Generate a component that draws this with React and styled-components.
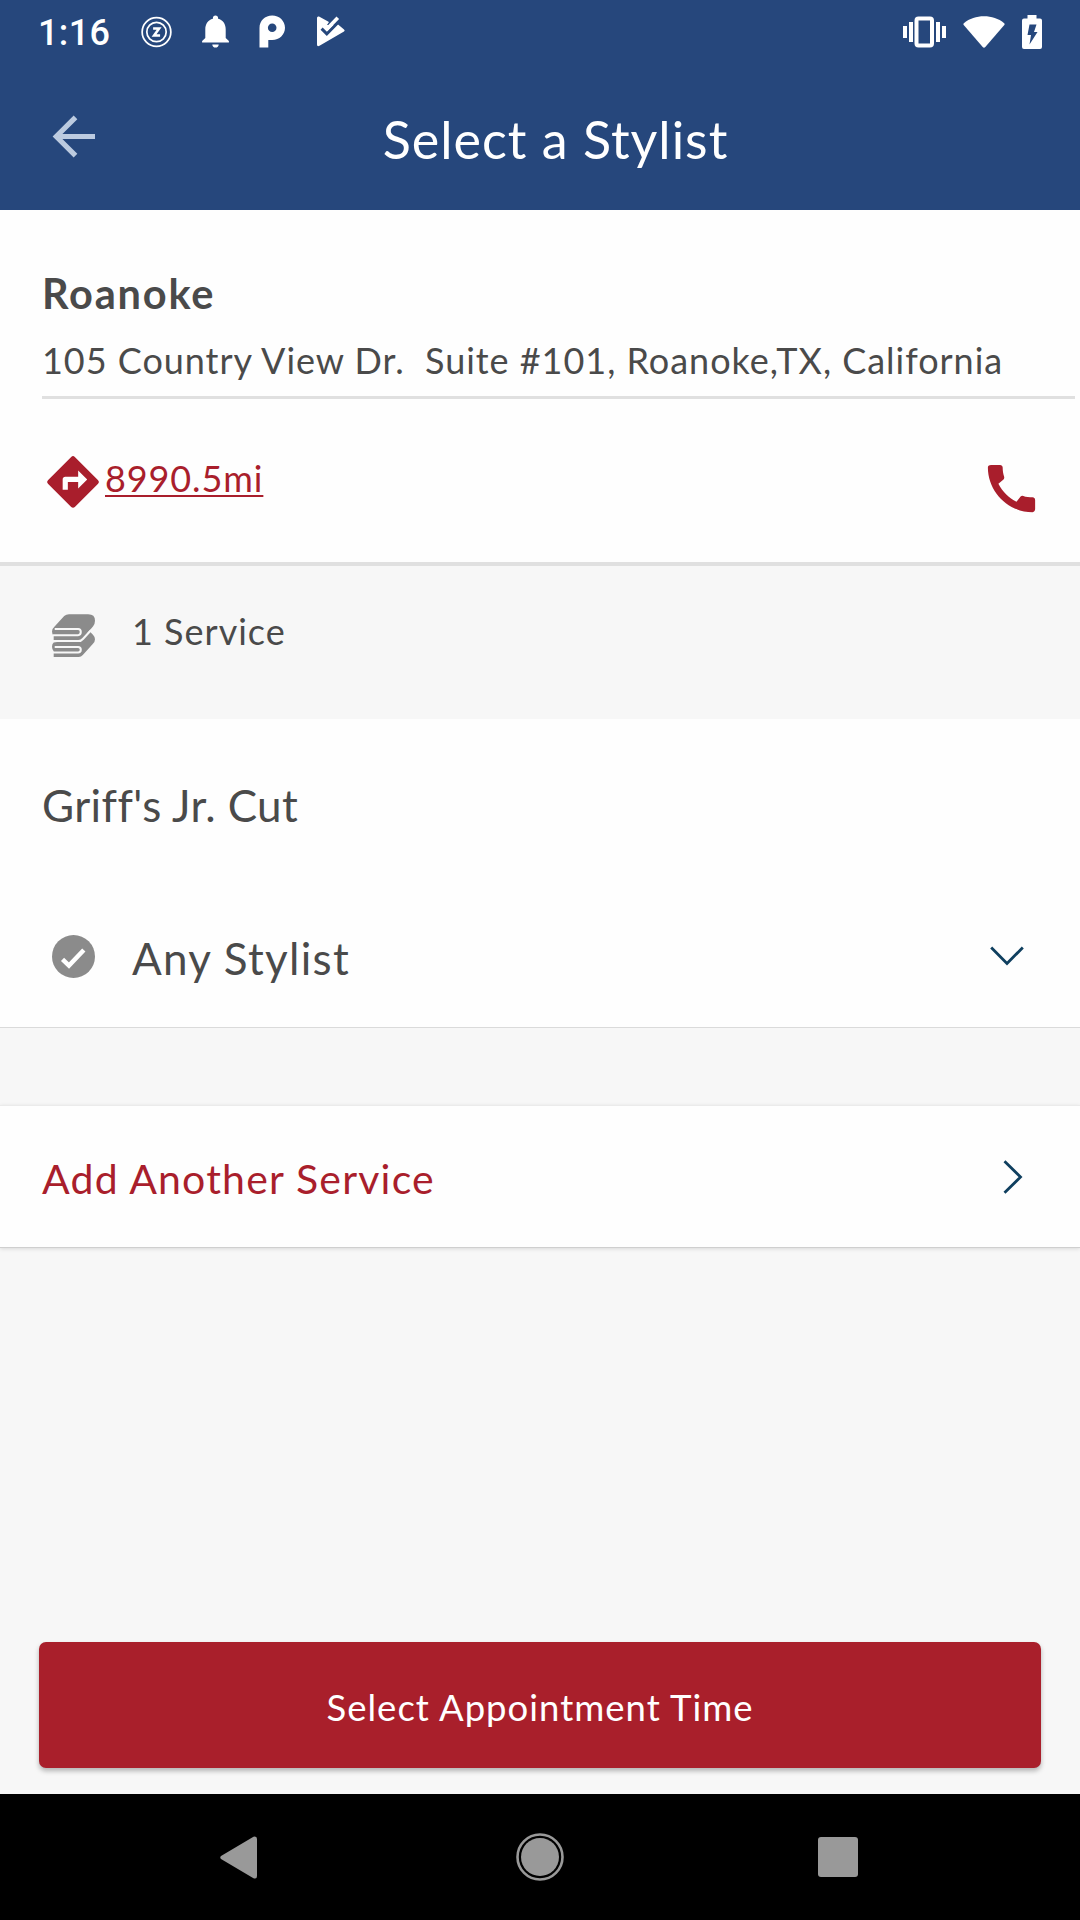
import React from 'react';
import styled, { createGlobalStyle } from 'styled-components';

const GlobalStyle = createGlobalStyle`
  * {
    box-sizing: border-box;
  }

  body {
    margin: 0;
    background: #f7f7f7;
    color: #4a4a4a;
    font-family: Lato, "Open Sans", sans-serif;
  }

  svg {
    display: block;
    flex-shrink: 0;
  }
`;

const Screen = styled.div`
  width: 1080px;
  height: 1920px;
  display: flex;
  flex-direction: column;
  overflow: hidden;
`;

const Header = styled.header`
  height: 210px;
  background: #26477c;
  color: #fff;
`;

const StatusBar = styled.div`
  height: 63px;
  display: flex;
  align-items: center;
  justify-content: space-between;
  padding: 0 38px;
`;

const StatusGroup = styled.div`
  display: flex;
  align-items: center;
  gap: ${({ $gap }) => $gap}px;
`;

const Clock = styled.span`
  width: 73px;
  padding-top: 3px;
  font-family: Roboto, sans-serif;
  font-size: 36px;
  font-weight: 500;
  letter-spacing: 0.4px;
`;

const AppBar = styled.div`
  height: 147px;
  display: flex;
  padding: 0 64px 0 52px;
`;

const BackButton = styled.div`
  width: 43px;
  padding-top: 52px;
`;

const Title = styled.h1`
  flex: 1;
  margin: 0;
  font-size: 52px;
  font-weight: 400;
  line-height: 153px;
  letter-spacing: 1px;
  text-align: center;
`;

const SalonCard = styled.section`
  height: 356px;
  padding: 58px 0 0 42px;
  background: #fefefe;
  border-bottom: 4px solid #e0e0e0;
`;

const SalonInfo = styled.div`
  margin-right: 5px;
  padding-bottom: 14px;
  border-bottom: 3px solid #e0e0e0;
`;

const SalonName = styled.h2`
  margin: 0 0 20px;
  font-size: 41.5px;
  font-weight: 700;
  line-height: 50px;
  letter-spacing: 1.8px;
`;

const Address = styled.p`
  margin: 0;
  font-size: 36px;
  line-height: 44px;
  letter-spacing: 0.97px;
  white-space: pre;
`;

const ContactRow = styled.div`
  display: flex;
  align-items: flex-start;
  justify-content: space-between;
  padding: 52px 37px 0 0;
  color: #a91e2c;
`;

const Directions = styled.div`
  display: flex;
  gap: 1px;
`;

const Distance = styled.a`
  margin-top: 5px;
  font-size: 36px;
  line-height: 44px;
  letter-spacing: 0.9px;
  text-decoration: underline;
  text-decoration-thickness: 2px;
  text-underline-offset: 3px;
  text-decoration-skip-ink: none;
`;

const CallButton = styled.div`
  padding-top: 6px;
`;

const ServiceCount = styled.div`
  height: 153px;
  display: flex;
  align-items: flex-start;
  gap: 37px;
  padding: 42px 0 0 52px;
`;

const CountIcon = styled.div`
  padding-top: 6px;
`;

const CountLabel = styled.span`
  padding-top: 1px;
  font-size: 36px;
  line-height: 44px;
  letter-spacing: 1px;
`;

const ServiceCard = styled.section`
  height: 309px;
  padding-top: 59px;
  background: #fefefe;
  border-bottom: 1px solid #dadada;
`;

const ServiceName = styled.h3`
  margin: 0 0 95px;
  padding-left: 42px;
  font-size: 44px;
  font-weight: 400;
  line-height: 54px;
  letter-spacing: 0.4px;
`;

const StylistRow = styled.div`
  display: flex;
  align-items: center;
  gap: 37px;
  padding: 0 56px 0 52px;
`;

const StylistName = styled.span`
  flex: 1;
  padding-top: 4px;
  font-size: 44px;
  line-height: 54px;
  letter-spacing: 1.3px;
`;

const AddServiceRow = styled.div`
  height: 143px;
  margin-top: 77px;
  display: flex;
  align-items: flex-start;
  justify-content: space-between;
  padding: 48px 57px 0 42px;
  background: #fefefe;
  color: #a91e2c;
  border-top: 1px solid #ebebeb;
  border-bottom: 1px solid #cfcfcf;
  box-shadow: 0 1px 4px rgba(0, 0, 0, 0.12);
`;

const AddServiceLabel = styled.span`
  font-size: 41px;
  line-height: 50px;
  letter-spacing: 1.2px;
`;

const ChevronBox = styled.div`
  padding-top: 6px;
`;

const SubmitButton = styled.button`
  height: 126px;
  margin: auto 39px 26px;
  padding: 3px 0 0;
  border: 0;
  border-radius: 7px;
  background: #a91f2b;
  color: #fff;
  font-family: inherit;
  font-size: 36.5px;
  letter-spacing: 1px;
  box-shadow: 0 3px 5px rgba(0, 0, 0, 0.28);
`;

const NavBar = styled.nav`
  height: 126px;
  display: flex;
  justify-content: space-between;
  align-items: center;
  padding: 0 222px 0 220px;
  background: #000;
`;

const HomeButton = styled.div`
  padding-left: 4px;
`;

const BadgeIcon = () => (
  <svg width="31" height="32" viewBox="0 0 32 32" fill="none" stroke="#fff">
    <circle cx="16" cy="16" r="14.8" strokeWidth="1.8" />
    <circle cx="16" cy="16" r="10" strokeWidth="1.8" />
    <path d="M12.5 12.4h6.200l-5.200 7.200h6.200" strokeWidth="2.600" />
  </svg>
);

const BellIcon = () => (
  <svg width="27" height="33" viewBox="0 0 27 33" fill="#fff">
    <path d="M13.5 0.5c1.6 0 2.6 1.1 2.6 2.5v0.8c5 1.3 7.6 5.5 7.6 10.4v8.8l3.2 3v1.6H0.1V26l3.2-3v-8.8c0-4.9 2.6-9.1 7.6-10.4V3c0-1.4 1-2.5 2.6-2.5zM10.3 29.4h6.4c0 1.8-1.4 3.2-3.2 3.2s-3.2-1.4-3.2-3.2z" />
  </svg>
);

const ParkingIcon = () => (
  <svg width="27" height="33" viewBox="0 0 27 33">
    <path
      fill="#fff"
      fillRule="evenodd"
      d="M0.5 32.5V13C0.5 5.500 6 0.500 13.200 0.500S26 6 26 12.800 20.500 25 13.200 25H9.300v7.500zM13.200 8.500a4.300 4.300 0 1 0 0 8.600 4.300 4.300 0 0 0 0-8.600z"
    />
  </svg>
);

const PlayCheckIcon = () => (
  <svg width="30" height="31" viewBox="0 0 30 31">
    <path
      d="M3 0.6L13 6 11 9 20 9l1.500-1L28 13.500q1.400 1 0 2L3.500 29.800Q1 31 1 28.500V2Q1 0 3 0.600z"
      fill="#fff"
    />
    <path d="M5.600 12.600l5.200 5.200L21.500 7" fill="none" stroke="#26477c" strokeWidth="3" />
    <path d="M10 14L21.800 1.800" fill="none" stroke="#fff" strokeWidth="3.600" />
  </svg>
);

const VibrateIcon = () => (
  <svg width="43" height="32" viewBox="0 0 43 32" fill="#fff">
    <rect x="0" y="10" width="4" height="12" />
    <rect x="6" y="6" width="4" height="20" />
    <rect x="33" y="6" width="4" height="20" />
    <rect x="39" y="10" width="4" height="12" />
    <rect x="13.5" y="2.5" width="15.5" height="27" rx="2" fill="none" stroke="#fff" strokeWidth="4" />
  </svg>
);

const WifiIcon = () => (
  <svg width="42" height="32" viewBox="0 0 42 32" fill="#fff">
    <path d="M0.8 7.2C6.5 2.5 13.5 0.3 21 0.3s14.5 2.2 20.2 6.9q0.8 0.8 0.1 1.7L22.3 31q-1.3 1.4-2.6 0L0.7 8.9q-0.7-0.9 0.1-1.7z" />
  </svg>
);

const BatteryIcon = () => (
  <svg width="20" height="34" viewBox="0 0 20 34">
    <path d="M5.5 0h9v3.5H18q2 0 2 2V32q0 2-2 2H2q-2 0-2-2V5.500q0-2 2-2h3.500z" fill="#fff" />
    <path d="M7.500 9.500h7L12 17h3.500L7.500 29.500l1.500-9.500H5.500z" fill="#26477c" />
  </svg>
);

const BackIcon = () => (
  <svg width="43" height="43" viewBox="0 0 43 43" fill="none" stroke="#bccbe0" strokeWidth="5.2">
    <path d="M43 21.500H5M23.500 2.300L4.300 21.500l19.200 19.200" />
  </svg>
);

const DirectionsIcon = () => (
  <svg width="62" height="62" viewBox="0 0 24 24" fill="#a91e2c">
    <path d="M21.71 11.29l-9-9a.996.996 0 0 0-1.41 0l-9 9a.996.996 0 0 0 0 1.41l9 9c.39.39 1.02.39 1.41 0l9-9a.996.996 0 0 0 0-1.41zM14 14.500V12h-4v3H8v-4c0-.55.45-1 1-1h5V7.500l3.500 3.500-3.500 3.500z" />
  </svg>
);

const PhoneIcon = () => (
  <svg width="63" height="63" viewBox="0 0 24 24" fill="#a91e2c">
    <path d="M20.01 15.38c-1.23 0-2.42-.2-3.53-.56a.977.977 0 0 0-1.01.24l-1.57 1.97c-2.83-1.35-5.48-3.9-6.89-6.83l1.95-1.66c.27-.28.35-.67.24-1.02-.37-1.11-.56-2.3-.56-3.53 0-.54-.45-.99-.99-.99H4.19C3.65 3 3 3.24 3 3.99 3 13.28 10.73 21 20.01 21c.71 0 .99-.63.99-1.18v-3.45c0-.54-.45-.99-.99-.99z" />
  </svg>
);

const TowelsIcon = () => (
  <svg width="43" height="43" viewBox="0 0 127 127">
    <path
      d="M5 127h74q7 0 12-6l30-33q12-14 0-27l-8-8L20 82 5 84Q0 88 0 97q0 8 5 13z"
      fill="#8b8b8b"
    />
    <path
      d="M50 1h57q20 0 20 19 0 10-6 17L94 68q-8 9-14 9H5V64Q0 60 0 52q0-8 7-14L36 6q6-5 14-5z"
      fill="#8b8b8b"
    />
    <path
      d="M8 44.500h69q8 0 8 9t-8 9H3M2 80h76q8 0 14-7l23-25M8 97.500h69q8 0 8 8t-8 8H3"
      fill="none"
      stroke="#f7f7f7"
      strokeWidth="6"
    />
  </svg>
);

const CheckCircleIcon = () => (
  <svg width="43" height="43" viewBox="0 0 20 20">
    <circle cx="10" cy="10" r="10" fill="#8b8b8b" />
    <path d="M4.900 11.300l3 2.900 6.900-7.200" fill="none" stroke="#fff" strokeWidth="2.100" />
  </svg>
);

const ChevronDown = () => (
  <svg width="34" height="20" viewBox="0 0 34 20" fill="none" stroke="#0f3f5f" strokeWidth="2.800">
    <path d="M1.200 1.500L17 17.500 32.800 1.500" />
  </svg>
);

const ChevronRight = () => (
  <svg width="20" height="34" viewBox="0 0 20 34" fill="none" stroke="#0f3f5f" strokeWidth="2.800">
    <path d="M1.500 1.200L17.500 17 1.500 32.800" />
  </svg>
);

const NavBack = () => (
  <svg width="37" height="43" viewBox="0 0 37 43" fill="#999">
    <path d="M1 20L33.500 0.700Q37 -0.300 37 3v37q0 3.500-3.500 2.300L1 23q-1.500-1.500 0-3z" />
  </svg>
);

const NavHome = () => (
  <svg width="48" height="48" viewBox="0 0 48 48">
    <circle cx="24" cy="24" r="22.500" fill="none" stroke="#999" strokeWidth="2.600" />
    <circle cx="24" cy="24" r="19" fill="#999" />
  </svg>
);

const NavRecent = () => (
  <svg width="40" height="40" viewBox="0 0 40 40">
    <rect width="40" height="40" rx="3" fill="#999" />
  </svg>
);

const App = () => {
  return (
    <>
      <GlobalStyle />
      <Screen>
        <Header>
          <StatusBar>
            <StatusGroup $gap={30}>
              <Clock>1:16</Clock>
              <BadgeIcon />
              <BellIcon />
              <ParkingIcon />
              <PlayCheckIcon />
            </StatusGroup>
            <StatusGroup $gap={17}>
              <VibrateIcon />
              <WifiIcon />
              <BatteryIcon />
            </StatusGroup>
          </StatusBar>
          <AppBar>
            <BackButton>
              <BackIcon />
            </BackButton>
            <Title>Select a Stylist</Title>
          </AppBar>
        </Header>

        <SalonCard>
          <SalonInfo>
            <SalonName>Roanoke</SalonName>
            <Address>{'105 Country View Dr.  Suite #101, Roanoke,TX, California'}</Address>
          </SalonInfo>
          <ContactRow>
            <Directions>
              <DirectionsIcon />
              <Distance>8990.5mi</Distance>
            </Directions>
            <CallButton>
              <PhoneIcon />
            </CallButton>
          </ContactRow>
        </SalonCard>

        <ServiceCount>
          <CountIcon>
            <TowelsIcon />
          </CountIcon>
          <CountLabel>1 Service</CountLabel>
        </ServiceCount>

        <ServiceCard>
          <ServiceName>Griff's Jr. Cut</ServiceName>
          <StylistRow>
            <CheckCircleIcon />
            <StylistName>Any Stylist</StylistName>
            <ChevronDown />
          </StylistRow>
        </ServiceCard>

        <AddServiceRow>
          <AddServiceLabel>Add Another Service</AddServiceLabel>
          <ChevronBox>
            <ChevronRight />
          </ChevronBox>
        </AddServiceRow>

        <SubmitButton>Select Appointment Time</SubmitButton>

        <NavBar>
          <NavBack />
          <HomeButton>
            <NavHome />
          </HomeButton>
          <NavRecent />
        </NavBar>
      </Screen>
    </>
  );
};

export default App;
